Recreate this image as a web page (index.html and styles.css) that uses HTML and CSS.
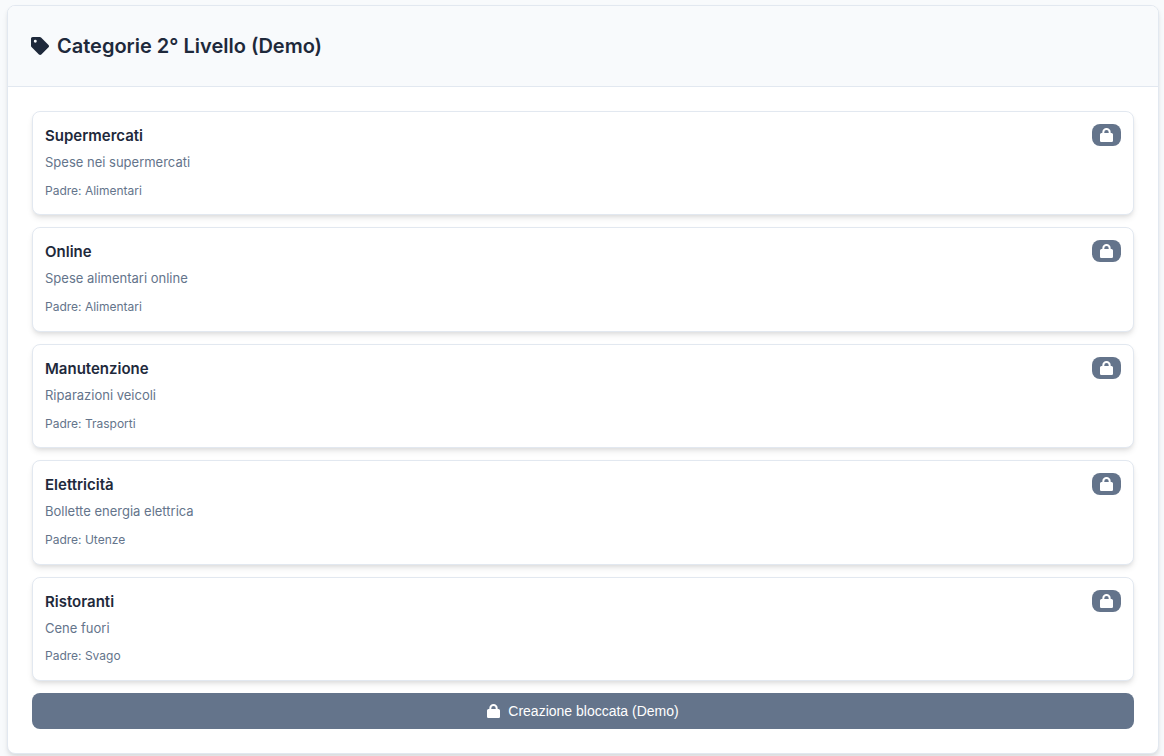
FILE: index.html
```html
<!DOCTYPE html>
<html lang="it">
<head>
<meta charset="utf-8">
<title>Categorie 2° Livello (Demo)</title>
<link rel="stylesheet" href="styles.css">
</head>
<body>
<svg class="sprite" aria-hidden="true">
  <symbol id="lock" viewBox="0 0 13 14"><path d="M1.500 5H2.300V4.200a4.200 4.200 0 0 1 8.400 0V5H11.500A1.500 1.500 0 0 1 13 6.500V12.700A1.300 1.300 0 0 1 11.700 14H1.300A1.300 1.300 0 0 1 0 12.700V6.500A1.500 1.500 0 0 1 1.500 5zM4.300 5H8.700V4.200a2.200 2.200 0 0 0-4.400 0z"/></symbol>
</svg>
<main class="panel">
  <header class="panel-header">
    <svg class="tag-icon" viewBox="0 0 512 512" aria-hidden="true"><path d="M0 252.118V48C0 21.490 21.490 0 48 0h204.118a48 48 0 0 1 33.941 14.059l211.882 211.882c18.745 18.745 18.745 49.137 0 67.882L293.823 497.941c-18.745 18.745-49.137 18.745-67.882 0L14.059 286.059A48 48 0 0 1 0 252.118zM122 76a42 42 0 1 0 0 84a42 42 0 1 0 0-84z"/></svg>
    <h1 class="panel-title">Categorie 2° Livello (Demo)</h1>
  </header>
  <div class="panel-body">
    <article class="card">
      <div class="card-text">
        <h2 class="card-title">Supermercati</h2>
        <p class="card-desc">Spese nei supermercati</p>
        <p class="card-parent">Padre: Alimentari</p>
      </div>
      <span class="badge"><svg class="lock-icon" role="img" aria-label="Bloccata"><use href="#lock"/></svg></span>
    </article>
    <article class="card">
      <div class="card-text">
        <h2 class="card-title">Online</h2>
        <p class="card-desc">Spese alimentari online</p>
        <p class="card-parent">Padre: Alimentari</p>
      </div>
      <span class="badge"><svg class="lock-icon" role="img" aria-label="Bloccata"><use href="#lock"/></svg></span>
    </article>
    <article class="card">
      <div class="card-text">
        <h2 class="card-title">Manutenzione</h2>
        <p class="card-desc">Riparazioni veicoli</p>
        <p class="card-parent">Padre: Trasporti</p>
      </div>
      <span class="badge"><svg class="lock-icon" role="img" aria-label="Bloccata"><use href="#lock"/></svg></span>
    </article>
    <article class="card">
      <div class="card-text">
        <h2 class="card-title">Elettricità</h2>
        <p class="card-desc">Bollette energia elettrica</p>
        <p class="card-parent">Padre: Utenze</p>
      </div>
      <span class="badge"><svg class="lock-icon" role="img" aria-label="Bloccata"><use href="#lock"/></svg></span>
    </article>
    <article class="card">
      <div class="card-text">
        <h2 class="card-title">Ristoranti</h2>
        <p class="card-desc">Cene fuori</p>
        <p class="card-parent">Padre: Svago</p>
      </div>
      <span class="badge"><svg class="lock-icon" role="img" aria-label="Bloccata"><use href="#lock"/></svg></span>
    </article>
    <button class="create-button" type="button"><svg class="lock-icon" aria-hidden="true"><use href="#lock"/></svg>Creazione bloccata (Demo)</button>
  </div>
</main>
</body>
</html>
```

FILE: styles.css
```css
* {
  box-sizing: border-box;
}

body {
  margin: 0;
  padding: 5px 5px 2px 7px;
  background: #f8fafc;
  color: #1e293b;
  font-family: Inter, "Liberation Sans", sans-serif;
  line-height: 1.6;
}

.sprite {
  position: absolute;
  width: 0;
  height: 0;
}

.panel {
  overflow: hidden;
  background: #fff;
  border: 1px solid #e2e8f0;
  border-radius: 8px;
  box-shadow: 0 4px 6px -1px rgba(0, 0, 0, 0.1), 0 2px 4px -1px rgba(0, 0, 0, 0.06);
}

.panel-header {
  display: flex;
  align-items: center;
  gap: 8px;
  padding: 24px 23px;
  background: #f8fafc;
  border-bottom: 1px solid #e2e8f0;
}

.tag-icon {
  width: 18px;
  height: 18px;
  fill: currentColor;
}

.panel-title {
  margin: 0;
  font-size: 20px;
  font-weight: 600;
  line-height: 32px;
}

.panel-body {
  display: flex;
  flex-direction: column;
  gap: 12px;
  padding: 24px;
}

.card {
  display: flex;
  justify-content: space-between;
  align-items: flex-start;
  padding: 12px 12px 13px;
  background: #fff;
  border: 1px solid #e2e8f0;
  border-radius: 8px;
  box-shadow: 0 4px 6px -1px rgba(0, 0, 0, 0.1), 0 2px 4px -1px rgba(0, 0, 0, 0.06);
}

.card-title {
  margin: 0 0 4px;
  font-size: 15px;
  font-weight: 600;
}

.card-desc {
  margin: 0 0 7px;
  color: #64748b;
  font-size: 13px;
}

.card-parent {
  margin: 0;
  color: #64748b;
  font-size: 12px;
  line-height: 1.8;
}

.badge {
  display: flex;
  padding: 4px 8px;
  background: #64748b;
  border-radius: 8px;
  color: #fff;
}

.lock-icon {
  width: 13px;
  height: 14px;
  fill: currentColor;
}

.create-button {
  display: flex;
  justify-content: center;
  align-items: center;
  gap: 8px;
  height: 36px;
  padding: 0 16px;
  background: #64748b;
  border: 0;
  border-radius: 8px;
  color: #fff;
  font-family: "Liberation Sans", Arial, sans-serif;
  font-size: 14px;
}
```
